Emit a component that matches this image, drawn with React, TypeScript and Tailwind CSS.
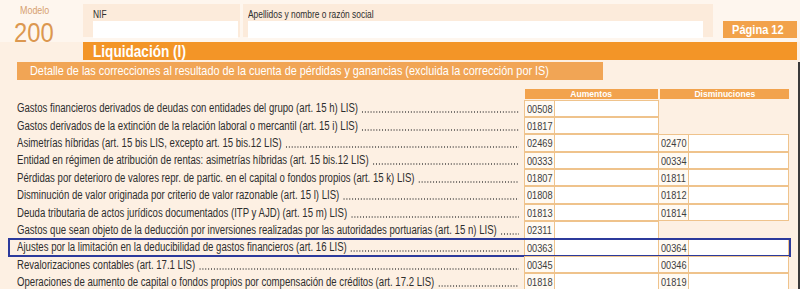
import React from 'react';

type Row = { label: string; a: string; d?: string; boxed?: boolean };

const rows: Row[] = [
  { label: 'Gastos financieros derivados de deudas con entidades del grupo (art. 15 h) LIS)', a: '00508' },
  { label: 'Gastos derivados de la extinción de la relación laboral o mercantil (art. 15 i) LIS)', a: '01817' },
  { label: 'Asimetrías híbridas (art. 15 bis LIS, excepto art. 15 bis.12 LIS)', a: '02469', d: '02470' },
  { label: 'Entidad en régimen de atribución de rentas: asimetrías híbridas (art. 15 bis.12 LIS)', a: '00333', d: '00334' },
  { label: 'Pérdidas por deterioro de valores repr. de partic. en el capital o fondos propios (art. 15 k) LIS)', a: '01807', d: '01811' },
  { label: 'Disminución de valor originada por criterio de valor razonable (art. 15 l) LIS)', a: '01808', d: '01812' },
  { label: 'Deuda tributaria de actos jurídicos documentados (ITP y AJD) (art. 15 m) LIS)', a: '01813', d: '01814' },
  { label: 'Gastos que sean objeto de la deducción por inversiones realizadas por las autoridades portuarias (art. 15 n) LIS)', a: '02311' },
  { label: 'Ajustes por la limitación en la deducibilidad de gastos financieros (art. 16 LIS)', a: '00363', d: '00364', boxed: true },
  { label: 'Revalorizaciones contables (art. 17.1 LIS)', a: '00345', d: '00346' },
  { label: 'Operaciones de aumento de capital o fondos propios por compensación de créditos (art. 17.2 LIS)', a: '01818', d: '01819' },
];

// no narrow font installed, so squeeze Arial-width text horizontally
const Narrow = ({ children, className = '' }: { children: React.ReactNode; className?: string }) => (
  <span className={`inline-block whitespace-nowrap origin-left scale-x-[0.8] ${className}`}>{children}</span>
);

const Cell = ({ code, w }: { code: string; w: string }) => (
  <div className={`flex h-full border border-[#efc38c] -mt-px ${w}`}>
    <div className="w-[30px] shrink-0 overflow-hidden border-r border-[#efc38c] bg-[#fffaf3] pl-[2px] text-[11.5px] leading-[16px] text-[#3d3d3d]">
      <Narrow>{code}</Narrow>
    </div>
    <div className="flex-1 bg-white" />
  </div>
);

export default function App() {
  return (
    <div
      className="w-[800px] h-[289px] overflow-hidden bg-[#fdf0e3] text-[#2e2e2e]"
      style={{ fontFamily: '"Liberation Sans", Arial, sans-serif' }}
    >
      {/* top header */}
      <div className="flex h-[42px] bg-[#fef6ee]">
        <div className="w-[83px] shrink-0 pt-[4px]">
          <div className="pl-[20px] text-[10.5px] leading-[12px] text-[#d6a070]">
            <Narrow className="scale-x-[0.85]">Modelo</Narrow>
          </div>
          <div className="pl-[14px] mt-[4px] text-[28px] leading-[26px] font-light text-[#dc9850]">
            <Narrow className="scale-x-[0.85]">200</Narrow>
          </div>
        </div>
        <div className="mt-[4px] h-[33px] w-[157px] bg-[#fcebdb] pl-[10px] pr-[2px]">
          <div className="text-[10.5px] leading-[14px] pt-[3px]">
            <Narrow>NIF</Narrow>
          </div>
          <div className="h-[17px] bg-white" />
        </div>
        <div className="ml-[3px] mt-[4px] h-[33px] w-[470px] bg-[#fcebdb] pl-[5px] pr-[10px]">
          <div className="text-[10.5px] leading-[14px] pt-[3px]">
            <Narrow>Apellidos y nombre o razón social</Narrow>
          </div>
          <div className="h-[17px] bg-white" />
        </div>
        <div className="ml-[10px] mt-[21px] h-[17px] w-[74px] bg-[#f2a24a] pl-[9px] text-white font-bold text-[13.5px] leading-[17px]">
          <Narrow className="scale-x-[0.82]">Página 12</Narrow>
        </div>
      </div>

      {/* section title */}
      <div className="ml-[83px] mr-[3px] h-[18px] bg-[#f39527] pl-[10px] text-white font-bold text-[17px] leading-[19px]">
        <Narrow>Liquidación (I)</Narrow>
      </div>

      <div className="border-r-2 border-[#3a3a3a] h-[229px]">
        <div className="ml-[17px] mt-[2px] w-[586px] h-[18px] overflow-hidden bg-[#f1a555] pl-[13px] text-white text-[13px] leading-[18px]">
          <Narrow className="scale-x-[0.835]">
            Detalle de las correcciones al resultado de la cuenta de pérdidas y ganancias (excluida la corrección por IS)
          </Narrow>
        </div>

        {/* column headers */}
        <div className="flex mt-[9px] h-[10px] pl-[525px]">
          <div className="w-[133px] bg-[#f2a34e] text-white font-bold text-[9.5px] leading-[10px] text-center">
            <span className="inline-block scale-x-[0.9]">Aumentos</span>
          </div>
          <div className="ml-[2px] w-[129px] bg-[#f2a34e] text-white font-bold text-[9.5px] leading-[10px] text-center">
            <span className="inline-block scale-x-[0.9]">Disminuciones</span>
          </div>
        </div>

        <div className="pt-px">
          {rows.map((r) => (
            <div key={r.a} className="relative flex h-[17.4px] items-center">
              <div className="w-[502px] ml-[17px] mr-[5px] overflow-hidden text-[12px] leading-[17px]">
                <div className="flex w-[628px] origin-left scale-x-[0.8] whitespace-nowrap">
                  <span className="shrink-0 pr-[4px]">{r.label}</span>
                  {/* leader dots */}
                  <span className="flex-1 self-end mb-[4px] h-[2px] bg-[radial-gradient(ellipse_at_center,#2e2e2e_0.8px,transparent_1.1px)] bg-[length:3.6px_2px] bg-repeat-x bg-left" />
                </div>
              </div>
              <Cell code={r.a} w="w-[135px]" />
              {r.d ? <Cell code={r.d} w="w-[131px] -ml-px" /> : <div className="w-[130px]" />}
              {r.boxed && (
                <div className="absolute left-[8px] top-[-1px] w-[783px] h-[19px] border-2 border-[#2c3a9c] pointer-events-none" />
              )}
            </div>
          ))}
        </div>
      </div>
    </div>
  );
}
